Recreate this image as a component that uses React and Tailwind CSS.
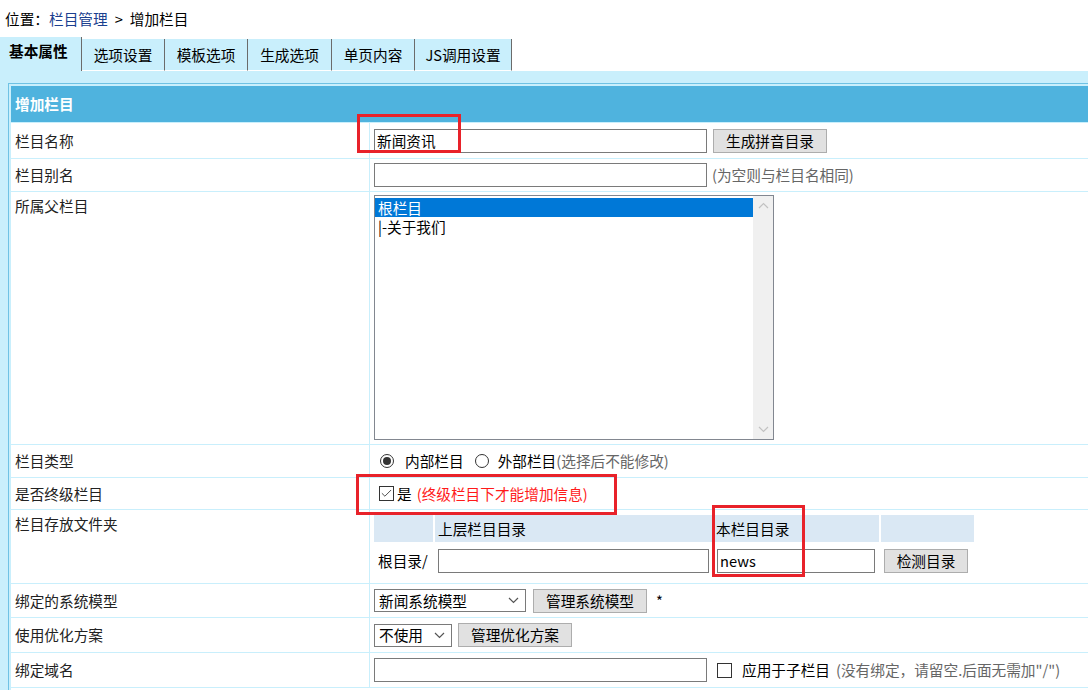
import { Check } from 'lucide-react'

function Input({ w, value, className = '' }) {
  return (
    <div className={`h-[24px] border border-[#7a7a7a] bg-white pl-[2px] flex items-center text-black ${w} ${className}`}>
      {value}
    </div>
  )
}

function Btn({ w, children, className = '' }) {
  return (
    <div className={`h-[24px] border border-[#adadad] bg-[#e1e1e1] flex items-center justify-center text-black ${w} ${className}`}>
      {children}
    </div>
  )
}

function Chevron({ up = false, className = '' }) {
  return (
    <svg width="11" height="7" viewBox="0 0 11 7" className={className}>
      <path d={up ? 'M1 6 L5.5 1.5 L10 6' : 'M1 1 L5.5 5.5 L10 1'} fill="none" stroke="currentColor" strokeWidth="1.2" />
    </svg>
  )
}

function Select({ w, value }) {
  return (
    <div className={`h-[23px] border border-[#7a7a7a] bg-white pl-[4px] pr-[6px] flex items-center justify-between text-black ${w}`}>
      <span>{value}</span>
      <Chevron className="text-[#555]" />
    </div>
  )
}

function Row({ label, h, top = false, children }) {
  return (
    <div className={`flex gap-[1px] ${h}`}>
      <div className={`w-[358px] shrink-0 bg-white pl-[4px] flex ${top ? 'items-start pt-[4px]' : 'items-center'}`}>
        {label}
      </div>
      <div className="flex-1 bg-white pl-[4px] flex items-center">{children}</div>
    </div>
  )
}

export default function App() {
  const tabs = ['选项设置', '模板选项', '生成选项', '单页内容', 'JS调用设置']
  const widths = ['w-[83px]', 'w-[83px]', 'w-[84px]', 'w-[83px]', 'w-[97px]']
  return (
    <div className="relative w-[1088px] h-[690px] overflow-hidden bg-white text-[14.67px] leading-[20px] text-[#222] font-['Microsoft_YaHei','Noto_Sans_CJK_SC',sans-serif]">
      {/* breadcrumb */}
      <div className="h-[37px] pl-[5px] flex items-center text-black">
        位置：<span className="text-[#1b3f8f]">栏目管理</span>
        <span className="mx-[7px]">&gt;</span>增加栏目
      </div>

      {/* tabs */}
      <div className="flex h-[34px]">
        <div className="w-[82px] bg-[#c9effc] border-r border-[#6b6b6b] pl-[9px] pt-[4px] font-bold text-black">基本属性</div>
        {tabs.map((t, i) => (
          <div key={t} className={`${widths[i]} bg-[#c9effc] border-r border-[#6b6b6b] border-b border-b-white mt-[2px] flex items-center justify-center text-black`}>
            {t}
          </div>
        ))}
      </div>

      {/* panel */}
      <div className="bg-[#c9effc] h-[620px] pl-[8px] pt-[12px]">
        <div className="w-[1100px] border border-[#6fc2e4] bg-[#c9effc] p-[2px] pr-0 flex flex-col gap-[1px]">
          <div className="h-[36px] bg-[#4fb3de] pl-[4px] flex items-center font-bold text-white">增加栏目</div>

          <Row label="栏目名称" h="h-[35px]">
            <Input w="w-[333px]" value="新闻资讯" />
            <Btn w="w-[114px]" className="ml-[6px]">生成拼音目录</Btn>
          </Row>

          <Row label="栏目别名" h="h-[32px]">
            <Input w="w-[333px]" value="" />
            <span className="ml-[5px] text-[#666]">(为空则与栏目名相同)</span>
          </Row>

          <Row label="所属父栏目" h="h-[252px]" top>
            <div className="self-start mt-[3px] w-[400px] h-[245px] border border-[#828790] bg-white flex">
              <div className="flex-1 pt-[2px]">
                <div className="h-[19px] bg-[#0078d7] text-white pl-[3px] flex items-center">根栏目</div>
                <div className="h-[20px] text-black pl-[3px] flex items-center">|-关于我们</div>
              </div>
              <div className="w-[20px] bg-[#f0f0f0] flex flex-col items-center justify-between py-[6px] text-[#c2c2c2]">
                <Chevron up />
                <Chevron />
              </div>
            </div>
          </Row>

          <Row label="栏目类型" h="h-[32px]">
            <div className="ml-[6px] w-[14px] h-[14px] rounded-full border border-[#333] flex items-center justify-center">
              <div className="w-[8px] h-[8px] rounded-full bg-[#333]" />
            </div>
            <span className="ml-[11px] text-black">内部栏目</span>
            <div className="ml-[11px] w-[14px] h-[14px] rounded-full border border-[#333]" />
            <span className="ml-[9px] text-black">外部栏目</span>
            <span className="text-[#666]">(选择后不能修改)</span>
          </Row>

          <Row label="是否终级栏目" h="h-[31px]">
            <div className="ml-[5px] w-[15px] h-[15px] border border-[#333] bg-white flex items-center justify-center">
              <Check size={13} strokeWidth={1.6} className="text-[#333]" />
            </div>
            <span className="ml-[3px] text-black">是</span>
            <span className="ml-[5px] text-[#ff1a1a]">(终级栏目下才能增加信息)</span>
          </Row>

          <Row label="栏目存放文件夹" h="h-[73px]" top>
            <div className="self-start mt-[5px] flex flex-col gap-[6px]">
              <div className="flex gap-[2px] h-[27px]">
                <div className="w-[59px] bg-[#dae8f4]" />
                <div className="w-[277px] bg-[#dae8f4] pl-[3px] flex items-center text-black">上层栏目目录</div>
                <div className="w-[165px] bg-[#dae8f4] pl-[2px] flex items-center text-black">本栏目目录</div>
                <div className="w-[93px] bg-[#dae8f4]" />
              </div>
              <div className="flex items-center h-[25px]">
                <span className="ml-[4px] w-[60px] text-black">根目录/</span>
                <Input w="w-[271px]" value="" />
                <Input w="w-[158px]" value="news" className="ml-[8px]" />
                <Btn w="w-[84px]" className="ml-[9px]">检测目录</Btn>
              </div>
            </div>
          </Row>

          <Row label="绑定的系统模型" h="h-[33px]">
            <Select w="w-[152px]" value="新闻系统模型" />
            <Btn w="w-[114px]" className="ml-[7px]">管理系统模型</Btn>
            <span className="ml-[9px] text-black">*</span>
          </Row>

          <Row label="使用优化方案" h="h-[34px]">
            <Select w="w-[78px]" value="不使用" />
            <Btn w="w-[114px]" className="ml-[6px]">管理优化方案</Btn>
          </Row>

          <Row label="绑定域名" h="h-[34px]">
            <Input w="w-[333px]" value="" />
            <div className="ml-[10px] w-[15px] h-[15px] border border-[#333] bg-white" />
            <span className="ml-[10px] text-black">应用于子栏目</span>
            <span className="ml-[6px] text-[#666]">(没有绑定，请留空.后面无需加"/")</span>
          </Row>

          <div className="h-[10px] bg-white" />
        </div>
      </div>

      {/* red annotation boxes */}
      <div className="absolute left-[357px] top-[114px] w-[104px] h-[39px] border-[3px] border-[#e8222a]" />
      <div className="absolute left-[356px] top-[474px] w-[261px] h-[41px] border-[3px] border-[#e8222a]" />
      <div className="absolute left-[712px] top-[505px] w-[93px] h-[72px] border-[3px] border-[#e8222a]" />
    </div>
  )
}
